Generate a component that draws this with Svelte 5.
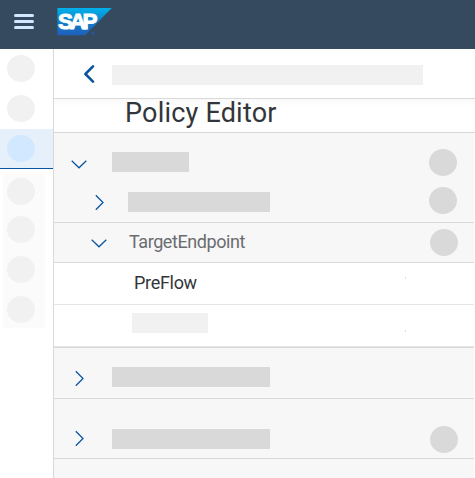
<script>
  const railTop = [0, 1];
  const railBottom = [0, 1, 2, 3];
  const rows = [
    { id: 'a', icon: 'down', bar: true, dot: true },
    { id: 'b', icon: 'right', bar: true, dot: true },
    { id: 'c', icon: 'down', text: 'TargetEndpoint', dot: true },
    { id: 'd', text: 'PreFlow', speck: true },
    { id: 'e', bar: true, speck: true },
    { id: 'f', icon: 'right', bar: true },
    { id: 'g', icon: 'right', bar: true, dot: true },
    { id: 'h' }
  ];
</script>

<div class="app">
  <header class="shell">
    <svg class="menu" width="20" height="15" viewBox="0 0 20 15" fill="none" stroke="#d1e8ff" stroke-width="3" stroke-linecap="round">
      <path d="M1.5 1.5H18.5M1.5 7.5H18.5M1.5 13.5H18.5" />
    </svg>
    <svg class="logo" width="55" height="36" viewBox="0 -4 55 36">
      <defs>
        <linearGradient id="sap" x1="0" y1="0" x2="0" y2="1">
          <stop offset="0" stop-color="#00b1eb" />
          <stop offset="0.5" stop-color="#0f80cc" />
          <stop offset="1" stop-color="#1f5fbb" />
        </linearGradient>
      </defs>
      <path d="M0.4 0H54.8L28 27.2H0.4Z" fill="url(#sap)" />
      <text x="1" y="21" textLength="39.5" lengthAdjust="spacing">SAP</text>
      <circle cx="36" cy="25.3" r="1.7" fill="#25569b" />
    </svg>
  </header>

  <div class="body">
    <nav class="rail">
      <div class="top">
        {#each railTop as item (item)}<span class="disc"></span>{/each}
      </div>
      <div class="selected"><span class="disc"></span></div>
      <div class="group">
        {#each railBottom as item (item)}<span class="disc"></span>{/each}
      </div>
    </nav>

    <main>
      <div class="crumb">
        <svg width="11" height="18" viewBox="0 0 11 18" fill="none" stroke="#0854a0" stroke-width="2.5" stroke-linecap="round" stroke-linejoin="round">
          <path d="M9 1.3L1.4 9L9 16.7" />
        </svg>
        <span class="bar"></span>
      </div>
      <div class="title"><h1>Policy Editor</h1></div>
      {#each rows as row (row.id)}
        <div class="row {row.id}">
          {#if row.icon}
            <span class="chevron">
              {#if row.icon === 'down'}
                <svg width="16" height="9" viewBox="0 0 16 9"><path d="M0.7 0.8L8 7.8L15.3 0.8" /></svg>
              {:else}
                <svg width="9" height="16" viewBox="0 0 9 16"><path d="M0.8 1.2L8 8.5L0.8 15.8" /></svg>
              {/if}
            </span>
          {/if}
          {#if row.text}<span class="label">{row.text}</span>{/if}
          {#if row.bar}<span class="bar"></span>{/if}
          {#if row.dot}<span class="dot"></span>{/if}
          {#if row.speck}<span class="speck"></span>{/if}
        </div>
      {/each}
    </main>
  </div>
</div>

<style>
  :global(body) { margin: 0; background: #fff; }
  .app { width: 475px; height: 478px; overflow: hidden; background: #fff; font-family: Roboto, "Liberation Sans", sans-serif; }
  .shell { height: 49px; background: #354a5f; display: flex; align-items: flex-start; }
  svg { display: block; flex: none; }
  .menu { margin: 14px 0 0 14px; }
  .logo { margin: 4px 0 0 23px; }
  .logo text { font: 700 22.5px "Liberation Sans", sans-serif; fill: #fff; stroke: #fff; stroke-width: 1; }
  .body { display: flex; height: 429px; }
  .rail { box-sizing: border-box; width: 54px; flex: none; border-right: 1px solid #d9d9d9; }
  .disc { display: block; width: 28px; height: 27px; border-radius: 50%; background: #f1f1f1; }
  .top { box-sizing: border-box; height: 80px; padding: 6px 0 0 7px; display: flex; flex-direction: column; gap: 13px; }
  .selected { box-sizing: border-box; height: 40px; padding: 6px 0 0 7px; background: #e5f0fa; border-bottom: 1px solid #0854a0; }
  .selected .disc { background: #d1e8ff; }
  .group { box-sizing: border-box; width: 42px; height: 154px; margin: 5px 0 0 3px; padding: 4px 0 0 4px; background: #fbfbfb; display: flex; flex-direction: column; gap: 13px; }
  .group .disc:first-child { margin-bottom: -2px; }
  main { width: 421px; display: flex; flex-direction: column; }
  .crumb { box-sizing: border-box; height: 50px; flex: none; border-bottom: 1px solid #d9d9d9; display: flex; }
  .crumb svg { margin: 16px 0 0 30px; }
  .crumb .bar { width: 311px; margin: 16px 0 0 17px; background: #f1f1f1; }
  .bar { flex: none; height: 20px; background: #d9d9d9; }
  .title { box-sizing: border-box; height: 34px; flex: none; padding-left: 71px; border-bottom: 1px solid #d9d9d9; background: linear-gradient(#fafafa, #fff 8px); }
  h1 { margin: 0; font-size: 27px; line-height: 29px; font-weight: 400; color: #32363a; letter-spacing: 0.2px; white-space: nowrap; }
  .row { position: relative; box-sizing: border-box; width: 420px; flex: none; display: flex; align-items: flex-start; background: #f7f7f7; border-bottom: 1px solid #d9d9d9; }
  .chevron { width: 40px; flex: none; }
  .chevron svg { fill: none; stroke: #0854a0; stroke-width: 1.25; }
  .dot { width: 28px; height: 27px; border-radius: 50%; background: #d9d9d9; margin: 0 17px 0 auto; flex: none; }
  .speck { width: 1px; height: 2px; margin: 0 68px 0 auto; background: #ddd; }
  .label { font-size: 18px; line-height: 22px; white-space: nowrap; }

  .a { height: 49px; border: 0; }
  .a .chevron { margin-left: 17px; width: 41px; padding-top: 27px; }
  .a .bar { width: 77px; margin-top: 19px; }
  .a .dot { margin-top: 16px; }
  .b { height: 41px; }
  .b .chevron { margin-left: 41px; width: 33px; padding-top: 12px; }
  .b .bar { width: 142px; margin-top: 10px; }
  .b .dot { margin-top: 5px; }
  .c { height: 40px; }
  .c .chevron { margin-left: 37px; width: 38px; padding-top: 16px; }
  .c .label { margin-top: 8px; color: #6a6d70; letter-spacing: -0.43px; }
  .c .dot { margin: 6px 16px 0 auto; }
  .d { height: 42px; background: #fff; border-color: #e5e5e5; }
  .d .label { margin: 9px 0 0 80px; color: #32363a; letter-spacing: -0.3px; }
  .d .speck { margin-top: 14px; }
  .e { height: 43px; background: #fff; box-shadow: inset 0 -1px #e5e5e5; }
  .e .bar { width: 76px; margin: 8px 0 0 78px; background: #f1f1f1; }
  .e .speck { margin-top: 25px; }
  .f { height: 51px; }
  .f .chevron { margin-left: 21px; width: 37px; padding-top: 22px; }
  .f .bar { width: 158px; margin-top: 19px; }
  .g { height: 60px; }
  .g .chevron { margin-left: 21px; width: 37px; padding-top: 31px; }
  .g .bar { width: 158px; margin-top: 30px; }
  .g .dot { margin: 27px 16px 0 auto; }
  .h { height: 19px; border: 0; }
</style>
